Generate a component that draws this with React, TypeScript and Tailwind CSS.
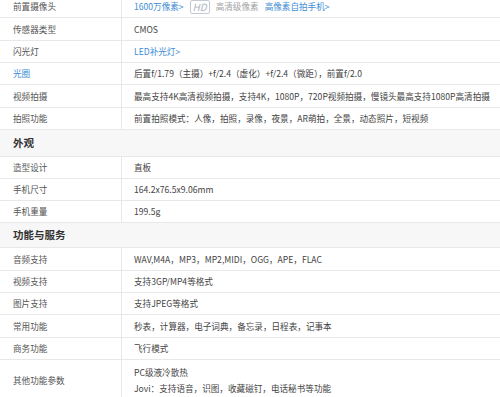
import React from "react";

type Part = { text: string; kind?: "link" | "muted" | "hd" };

interface SpecRow {
  label: string;
  labelLink?: boolean;
  value: Part[][];
  h: string;
}

const link = (text: string): Part => ({ text, kind: "link" });
const plain = (text: string): Part => ({ text });

const groupTop: SpecRow[] = [
  {
    label: "前置摄像头",
    h: "h-[22px]",
    value: [
      [
        link("1600万像素>"),
        { text: "HD", kind: "hd" },
        { text: "高清级像素", kind: "muted" },
        link("高像素自拍手机>"),
      ],
    ],
  },
  { label: "传感器类型", h: "h-[23px]", value: [[plain("CMOS")]] },
  { label: "闪光灯", h: "h-[22px]", value: [[link("LED补光灯>")]] },
  {
    label: "光圈",
    labelLink: true,
    h: "h-[22px]",
    value: [[plain("后置f/1.79（主摄）+f/2.4（虚化）+f/2.4（微距），前置f/2.0")]],
  },
  {
    label: "视频拍摄",
    h: "h-[23px]",
    value: [
      [
        plain(
          "最高支持4K高清视频拍摄，支持4K，1080P，720P视频拍摄，慢镜头最高支持1080P高清拍摄"
        ),
      ],
    ],
  },
  {
    label: "拍照功能",
    h: "h-[22px]",
    value: [[plain("前置拍照模式：人像，拍照，录像，夜景，AR萌拍，全景，动态照片，短视频")]],
  },
];

const looks: SpecRow[] = [
  { label: "造型设计", h: "h-[22px]", value: [[plain("直板")]] },
  { label: "手机尺寸", h: "h-[22px]", value: [[plain("164.2x76.5x9.06mm")]] },
  { label: "手机重量", h: "h-[22px]", value: [[plain("199.5g")]] },
];

const services: SpecRow[] = [
  {
    label: "音频支持",
    h: "h-[23px]",
    value: [[plain("WAV,M4A，MP3，MP2,MIDI，OGG，APE，FLAC")]],
  },
  { label: "视频支持", h: "h-[22px]", value: [[plain("支持3GP/MP4等格式")]] },
  { label: "图片支持", h: "h-[22px]", value: [[plain("支持JPEG等格式")]] },
  {
    label: "常用功能",
    h: "h-[23px]",
    value: [[plain("秒表，计算器，电子词典，备忘录，日程表，记事本")]],
  },
  { label: "商务功能", h: "h-[22px]", value: [[plain("飞行模式")]] },
  {
    label: "其他功能参数",
    h: "h-[42px]",
    value: [[plain("PC级液冷散热")], [plain("Jovi：支持语音，识图，收藏磁钉，电话秘书等功能")]],
  },
];

function Value({ part }: { part: Part }) {
  if (part.kind === "hd") {
    return (
      <span className="inline-flex h-[14px] w-[20px] items-center justify-center rounded-[2px] border border-[#c4cad3] text-[10px] italic leading-none text-[#adb5c0]">
        {part.text}
      </span>
    );
  }
  if (part.kind === "link") {
    return <span className="text-[#3d8dd6]">{part.text}</span>;
  }
  if (part.kind === "muted") {
    return <span className="text-[#a3a3a3]">{part.text}</span>;
  }
  return <span>{part.text}</span>;
}

function Row({ row }: { row: SpecRow }) {
  return (
    <div className={`flex border-b border-[#e8e8e8] ${row.h}`}>
      <div
        className={`flex w-[122px] shrink-0 items-center border-r border-[#e8e8e8] pl-[13px] ${
          row.labelLink ? "text-[#3d8dd6]" : "text-[#555]"
        }`}
      >
        {row.label}
      </div>
      <div className="flex flex-col justify-center pl-[12px] text-[#444]">
        {row.value.map((line, i) => (
          <div key={i} className="flex h-[16px] items-center gap-[6px] whitespace-nowrap">
            {line.map((part, j) => (
              <Value key={j} part={part} />
            ))}
          </div>
        ))}
      </div>
    </div>
  );
}

function Header({ title, h }: { title: string; h: string }) {
  return (
    <div
      className={`flex items-center border-b border-[#e8e8e8] bg-[#f7f7f7] pl-[13px] text-[10.5px] font-bold text-[#333] ${h}`}
    >
      {title}
    </div>
  );
}

export default function App() {
  return (
    <div
      className="h-[397px] w-[500px] overflow-hidden bg-white text-[8.6px]"
      style={{ fontFamily: '"Noto Sans CJK SC", "Noto Sans", sans-serif' }}
    >
      <div className="-mt-[4px]">
        {groupTop.map((row) => (
          <Row key={row.label} row={row} />
        ))}
        <Header title="外观" h="h-[27px]" />
        {looks.map((row) => (
          <Row key={row.label} row={row} />
        ))}
        <Header title="功能与服务" h="h-[25px]" />
        {services.map((row) => (
          <Row key={row.label} row={row} />
        ))}
      </div>
    </div>
  );
}
